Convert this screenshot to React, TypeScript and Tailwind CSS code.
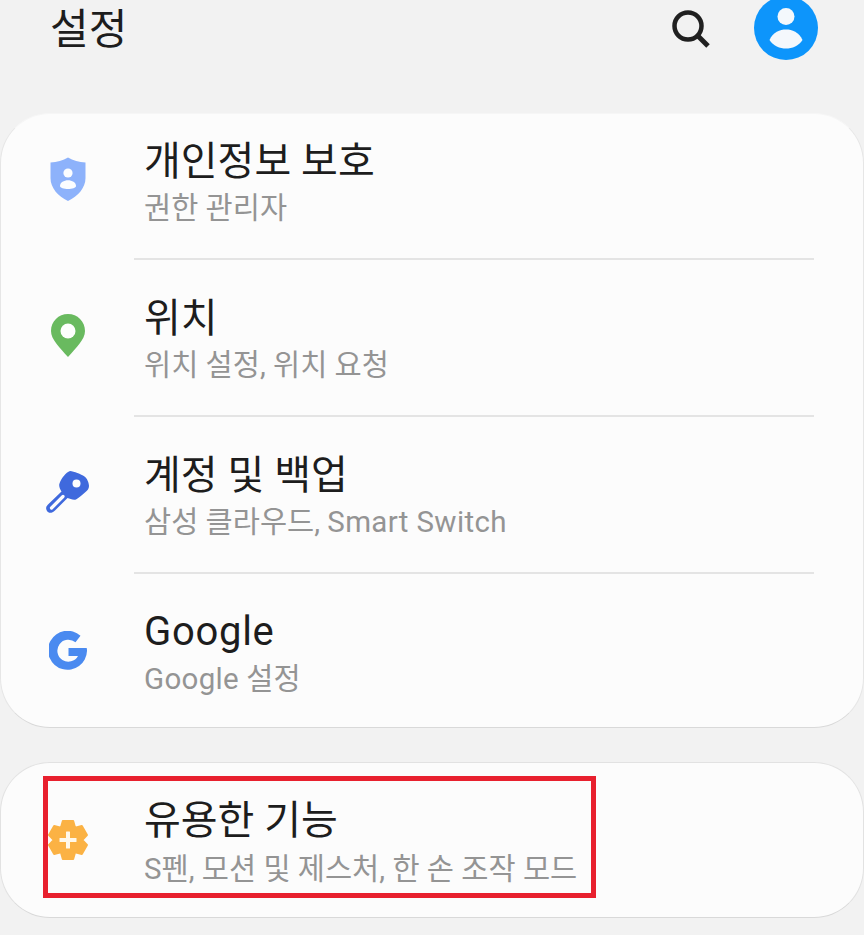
import React from "react";

const FONT = "font-['Roboto','Noto_Sans_CJK_KR',sans-serif]";

function ShieldIcon() {
  return (
    <svg width="36" height="44" viewBox="0 0 36 44" className="block">
      <path d="M18 0.5 C23 3.5 29 5 35.5 5.5 V21 C35.5 31 28 39 18 44 C8 39 0.5 31 0.5 21 V5.5 C7 5 13 3.5 18 0.5 Z" fill="#8DB2FB" />
      <circle cx="18" cy="16" r="4.6" fill="#FBFDFF" />
      <path d="M10 29 C10 25.5 14 23.3 18 23.3 C22 23.3 26 25.5 26 29 C26 31 22 32 18 32 C14 32 10 31 10 29 Z" fill="#FBFDFF" />
    </svg>
  );
}

function PinIcon() {
  return (
    <svg width="34" height="43" viewBox="0 0 34 43" className="block">
      <path d="M17 0 C26.5 0 34 7.5 34 17 C34 25.5 25 34 17 43 C9 34 0 25.5 0 17 C0 7.5 7.5 0 17 0 Z" fill="#69BA5F" />
      <circle cx="17" cy="17" r="7.5" fill="#FDFFFD" />
    </svg>
  );
}

function KeyIcon() {
  return (
    <svg width="44" height="43" viewBox="0 0 44 43" className="block">
      <path d="M24 0 C28 0.5 35 3 38.5 5.5 C41 7 43 12 43 15 C43 17.5 41.5 19.5 39.5 21 C36 24 33 27 30 28.5 C27 29.5 24 27.5 21.5 27 L9 39.5 C6 42.5 2.5 42.5 1 40 C-0.5 37.5 0 35.5 2 33.5 L15.5 20.5 C14 18 12.5 15 13.5 12.5 C15 8 20 1 24 0 Z" fill="#3F69DD" />
      <path d="M5.5 37 L17 25.5" stroke="#FCFCFD" strokeWidth="3.2" strokeLinecap="round" fill="none" />
      <circle cx="30.5" cy="12.5" r="4" fill="#FCFCFD" />
    </svg>
  );
}

function GIcon() {
  return (
    <svg width="38" height="40" viewBox="0 0 38 40" className="block">
      <path d="M31.5 4.7 A19.5 19.5 0 1 0 38 20 C38 19 38 18 37.7 17 H19.5 V25 H29 A11 11 0 1 1 26.5 11.3 Z" fill="#4A8AF0" />
    </svg>
  );
}

function GearPlusIcon() {
  return (
    <svg width="40" height="42" viewBox="0 0 40 42" className="block">
      <g transform="translate(20 21) scale(0.95) translate(-20 -21)">
        <path
          d="M14.5 1 H25.5 L27.5 8 L34.6 6.2 L40 15.8 L35 21 L40 26.2 L34.6 35.8 L27.5 34 L25.5 41 H14.5 L12.5 34 L5.4 35.8 L0 26.2 L5 21 L0 15.8 L5.4 6.2 L12.5 8 Z"
          fill="#FBB244"
          stroke="#FBB244"
          strokeWidth="2"
          strokeLinejoin="round"
        />
      </g>
      <rect x="18" y="12.5" width="4" height="17" rx="0.5" fill="#FFF8EA" />
      <rect x="11.5" y="19" width="17" height="4" rx="0.5" fill="#FFF8EA" />
    </svg>
  );
}

function Row({
  icon,
  title,
  sub,
  divider,
  h,
  iconClass = "",
  textClass = "pt-[2px]",
  subClass = "mt-[6px]",
}: {
  icon: React.ReactNode;
  title: React.ReactNode;
  sub: React.ReactNode;
  divider?: boolean;
  h: string;
  iconClass?: string;
  textClass?: string;
  subClass?: string;
}) {
  return (
    <div className={`flex flex-col ${h}`}>
      <div className="flex flex-1 items-center">
        <div className={`flex w-[133px] shrink-0 justify-center ${iconClass}`}>{icon}</div>
        <div className={`pl-[10px] ${textClass}`}>
          <div className="text-[40px] leading-[46px] text-[#1d1d1d]">{title}</div>
          <div className={`text-[29.5px] leading-[34px] text-[#949494] ${subClass}`}>{sub}</div>
        </div>
      </div>
      {divider && <div className="ml-[133px] mr-[49px] h-[2px] bg-[#e4e4e4]" />}
    </div>
  );
}

export default function App() {
  return (
    <div className={`relative h-[935px] w-[864px] overflow-hidden bg-[#f2f2f2] ${FONT}`}>
      <header className="flex h-[113px] items-start justify-between pl-[50px] pr-[46px]">
        <div className="mt-[7px] text-[42px] leading-[46px] text-[#1d1d1d]">설정</div>
        <div className="flex items-start gap-[44px]">
          <svg width="38" height="38" viewBox="0 0 38 38" className="mt-[10px] block">
            <circle cx="16" cy="16" r="13.5" fill="none" stroke="#202020" strokeWidth="4.5" />
            <path d="M25.5 25.5 L36 36" stroke="#202020" strokeWidth="5" />
          </svg>
          <svg width="64" height="64" viewBox="0 0 64 64" className="-mt-[4px] block">
            <circle cx="32" cy="32" r="32" fill="#0D95FB" />
            <circle cx="32" cy="20.5" r="8.5" fill="#F4F8FC" />
            <path d="M15.5 44 C19 36 26 33.5 32 33.5 C38 33.5 45 36 48.5 44 C45 50 38 52.5 32 52.5 C26 52.5 19 50 15.5 44 Z" fill="#F4F8FC" />
          </svg>
        </div>
      </header>

      <section className="rounded-[50px] border border-[#e6e6e6] border-t-[#f6f6f6] border-b-[#d9d9d9] bg-[#fcfcfc]">
        <Row h="h-[146px]" divider iconClass="pb-[15px]" textClass="pb-[8px]" icon={<ShieldIcon />} title="개인정보 보호" sub="권한 관리자" />
        <Row h="h-[157px]" divider iconClass="pb-[4px]" icon={<PinIcon />} title="위치" sub="위치 설정, 위치 요청" />
        <Row
          h="h-[157px]"
          divider
          iconClass="pb-[4px]"
          icon={<KeyIcon />}
          title="계정 및 백업"
          sub={
            <>
              삼성 클라우드, <span className="tracking-[0.35px]">Smart Switch</span>
            </>
          }
        />
        <Row
          h="h-[153px]"
          textClass="pt-[4px]"
          subClass="mt-[7px]"
          icon={<GIcon />}
          title={<span className="tracking-[0.7px]">Google</span>}
          sub={
            <>
              <span className="tracking-[0.3px]">Google</span> 설정
            </>
          }
        />
      </section>

      <section className="mt-[34px] rounded-[50px] border border-[#e2e2e2] border-b-[#d9d9d9] bg-[#fcfcfc]">
        <Row h="h-[154px]" textClass="pt-[4px]" subClass="mt-[8px]" icon={<GearPlusIcon />} title="유용한 기능" sub="S펜, 모션 및 제스처, 한 손 조작 모드" />
      </section>

      <div className="absolute left-[43px] top-[776px] h-[122px] w-[553px] border-[5px] border-[#e8202e]" />
    </div>
  );
}
